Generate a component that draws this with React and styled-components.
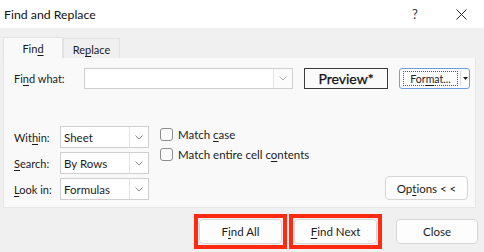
import React from 'react';
import styled, { createGlobalStyle } from 'styled-components';

const GlobalStyle = createGlobalStyle`
  html, body {
    margin: 0;
    padding: 0;
    background: #f0f0f0;
  }
  body {
    font-family: Lato, "Noto Sans", sans-serif;
    color: #1b1b1b;
  }
`;

// window shell
const Window = styled.div`
  width: 484px;
  height: 252px;
  display: flex;
  flex-direction: column;
  background: #f0f0f0;
  overflow: hidden;
  font-size: 11px;
`;

const TitleBar = styled.div`
  height: 28px;
  flex: none;
  display: flex;
  align-items: center;
  background: #fff;
  padding-left: 4px;
  font-size: 12.3px;
  color: #111;
`;

const Title = styled.div`
  flex: 1;
`;

const TitleButton = styled.div`
  width: ${p => p.$w}px;
  display: flex;
  justify-content: center;
  align-items: center;
  color: #333;
  font-size: 13px;
`;

const Body = styled.div`
  flex: 1;
  display: flex;
  flex-direction: column;
  padding: 9px 0 0 3px;
`;

const Tabs = styled.div`
  display: flex;
  align-items: flex-end;
  height: 21px;
`;

const Tab = styled.div`
  box-sizing: border-box;
  width: ${p => p.$w}px;
  height: ${p => (p.$active ? 21 : 20)}px;
  display: flex;
  align-items: center;
  justify-content: center;
  background: ${p => (p.$active ? '#f9f9f9' : '#f0f0f0')};
  border: 1px solid #e3e3e3;
  border-bottom: none;
  padding-top: 1px;
`;

const Panel = styled.div`
  box-sizing: border-box;
  height: 150px;
  margin-right: 8px;
  background: #f9f9f9;
  border: 1px solid #e6e6e6;
  border-top: none;
  padding: 10px 0 0 10px;
  display: flex;
  flex-direction: column;
`;

const FindRow = styled.div`
  display: flex;
  align-items: center;
  height: 21px;
`;

const Label = styled.div`
  width: ${p => p.$w}px;
  flex: none;
`;

const Key = styled.span`
  text-decoration: underline;
  text-underline-offset: 2px;
  text-decoration-thickness: 1px;
`;

const Combo = styled.div`
  box-sizing: border-box;
  width: ${p => p.$w}px;
  height: ${p => p.$h || 21}px;
  background: #fff;
  border: 1px solid #cfcfcf;
  display: flex;
  align-items: stretch;
`;

const ComboText = styled.div`
  flex: 1;
  display: flex;
  align-items: center;
  padding-left: 3px;
  font-size: 11.5px;
`;

const ComboArrow = styled.div`
  width: 18px;
  border-left: 1px solid #e2e2e2;
  display: flex;
  align-items: center;
  justify-content: center;
  background: ${p => (p.$muted ? '#fbfbfb' : '#fff')};
`;

const PreviewBox = styled.div`
  box-sizing: border-box;
  width: 84px;
  height: 21px;
  margin-left: 11px;
  border: 1px solid #3a3a3a;
  background: #fafafa;
  display: flex;
  align-items: center;
  justify-content: center;
  font-size: 14px;
  color: #111;
  -webkit-text-stroke: 0.25px #111;
`;

const FormatButton = styled.div`
  box-sizing: border-box;
  width: 71px;
  height: 21px;
  margin-left: 11px;
  border: 1px solid #6f9fe0;
  border-radius: 3px;
  background: #fdfdfd;
  display: flex;
  align-items: stretch;
  padding: 2px 0 2px 3px;
`;

const FocusRect = styled.div`
  flex: 1;
  border: 1px dotted #555;
  display: flex;
  align-items: center;
  justify-content: center;
  font-size: 10.5px;
`;

const SplitArrow = styled.div`
  width: 8px;
  margin-left: 2px;
  border-left: 1px solid #dcdcdc;
  display: flex;
  align-items: center;
  justify-content: center;
`;

const Lower = styled.div`
  margin-top: 37px;
  display: flex;
  align-items: flex-start;
`;

const Fields = styled.div`
  display: flex;
  flex-direction: column;
  gap: 4px;
`;

const FieldRow = styled.div`
  display: flex;
  align-items: center;
`;

const Checks = styled.div`
  margin-left: 11px;
  margin-top: 2px;
  display: flex;
  flex-direction: column;
  gap: 7px;
`;

const CheckRow = styled.div`
  display: flex;
  align-items: center;
  gap: 5px;
  height: 13px;
  font-size: 11.5px;
`;

const CheckBox = styled.div`
  box-sizing: border-box;
  width: 13px;
  height: 13px;
  border: 1px solid #8d8d8d;
  border-radius: 3px;
  background: #fbfbfb;
`;

const Spacer = styled.div`
  flex: 1;
`;

const Button = styled.div`
  box-sizing: border-box;
  width: ${p => p.$w || 83}px;
  height: ${p => p.$h || 25}px;
  background: #fdfdfd;
  border: 1px solid #d6d6d6;
  border-radius: 4px;
  display: flex;
  align-items: center;
  justify-content: center;
  font-size: 11.5px;
`;

// the red highlight drawn round a button in the screenshot
const Marker = styled.div`
  border: 4px solid #ff2a10;
  padding: 1px;
  margin-left: ${p => p.$ml || 0}px;
`;

const OptionsWrap = styled.div`
  align-self: flex-end;
  margin-right: 7px;
`;

const Footer = styled.div`
  flex: 1;
  display: flex;
  align-items: center;
  padding-top: 3px;
  padding-right: 6px;
`;

const CloseWrap = styled.div`
  margin-left: 14px;
`;

const Chevron = ({ color = '#8a8a8a' }) => (
  <svg width="8" height="5" viewBox="0 0 8 5">
    <path d="M0.5 0.5 L4 4 L7.5 0.5" fill="none" stroke={color} strokeWidth="1" />
  </svg>
);

const selects = [
  { label: <>Wit<Key>h</Key>in:</>, value: 'Sheet' },
  { label: <><Key>S</Key>earch:</>, value: 'By Rows' },
  { label: <><Key>L</Key>ook in:</>, value: 'Formulas' },
];

export default function App() {
  return (
    <Window>
      <GlobalStyle />
      <TitleBar>
        <Title>Find and Replace</Title>
        <TitleButton $w={46}>?</TitleButton>
        <TitleButton $w={46}>
          <svg width="11" height="11" viewBox="0 0 11 11">
            <path d="M0.5 0.5 L10.5 10.5 M10.5 0.5 L0.5 10.5" stroke="#222" strokeWidth="1" />
          </svg>
        </TitleButton>
      </TitleBar>
      <Body>
        <Tabs>
          <Tab $w={60} $active>Fin<Key>d</Key></Tab>
          <Tab $w={57}>Re<Key>p</Key>lace</Tab>
        </Tabs>
        <Panel>
          <FindRow>
            <Label $w={70}>Fi<Key>n</Key>d what:</Label>
            <Combo $w={209}>
              <ComboText />
              <ComboArrow $muted><Chevron color="#b0b0b0" /></ComboArrow>
            </Combo>
            <PreviewBox>Preview*</PreviewBox>
            <FormatButton>
              <FocusRect>For<Key>m</Key>at...</FocusRect>
              <SplitArrow>
                <svg width="5" height="3" viewBox="0 0 5 3">
                  <path d="M0 0 H5 L2.5 3 Z" fill="#222" />
                </svg>
              </SplitArrow>
            </FormatButton>
          </FindRow>
          <Lower>
            <Fields>
              {selects.map((s, i) => (
                <FieldRow key={i}>
                  <Label $w={46}>{s.label}</Label>
                  <Combo $w={89} $h={22}>
                    <ComboText>{s.value}</ComboText>
                    <ComboArrow><Chevron /></ComboArrow>
                  </Combo>
                </FieldRow>
              ))}
            </Fields>
            <Checks>
              <CheckRow><CheckBox /><span>Match <Key>c</Key>ase</span></CheckRow>
              <CheckRow><CheckBox /><span>Match entire cell c<Key>o</Key>ntents</span></CheckRow>
            </Checks>
            <Spacer />
            <OptionsWrap>
              <Button $w={83} $h={24}>Op<Key>t</Key>ions &lt; &lt;</Button>
            </OptionsWrap>
          </Lower>
        </Panel>
        <Footer>
          <Spacer />
          <Marker><Button>F<Key>i</Key>nd All</Button></Marker>
          <Marker $ml={2}><Button><Key>F</Key>ind Next</Button></Marker>
          <CloseWrap><Button $w={82}>Close</Button></CloseWrap>
        </Footer>
      </Body>
    </Window>
  );
}
